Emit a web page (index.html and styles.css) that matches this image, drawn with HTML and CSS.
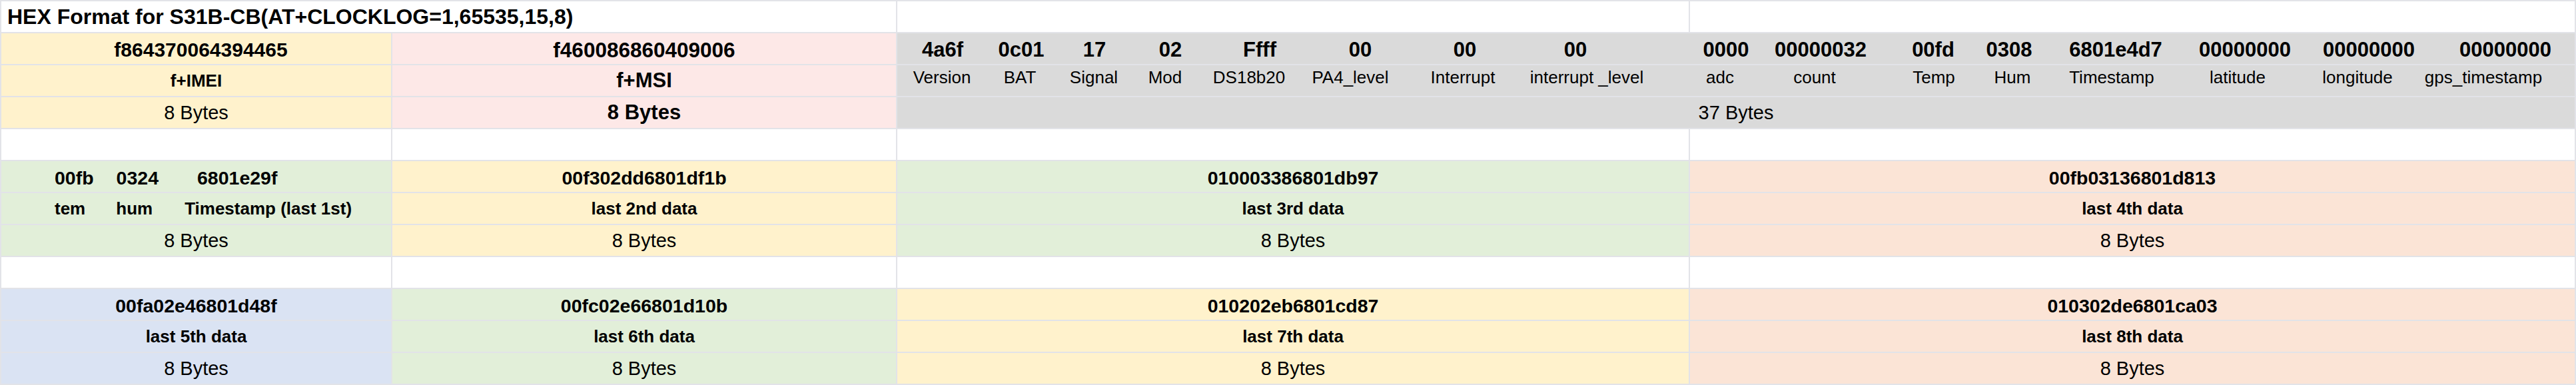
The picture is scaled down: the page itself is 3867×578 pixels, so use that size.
FILE: index.html
```html
<!DOCTYPE html>
<html lang="en">
<head>
<meta charset="utf-8">
<title>HEX Format for S31B-CB</title>
<link rel="stylesheet" href="styles.css">
</head>
<body>
<div class="sheet">
  <!-- row 0 -->
  <div class="cell title">HEX Format for S31B-CB(AT+CLOCKLOG=1,65535,15,8)</div>
  <div class="cell"></div>
  <div class="cell"></div>

  <!-- rows 1-3 -->
  <div class="cell yellow val v30 nudge">f864370064394465</div>
  <div class="cell pink val v31">f460086860409006</div>
  <div class="cell gray wide fields fvals">
    <span>4a6f</span><span>0c01</span><span>17</span><span>02</span><span>Ffff</span><span>00</span><span>00</span><span>00</span><span>0000</span><span>00000032</span><span>00fd</span><span>0308</span><span>6801e4d7</span><span>00000000</span><span>00000000</span><span>00000000</span>
  </div>

  <div class="cell yellow lbl">f+IMEI</div>
  <div class="cell pink lbl big">f+MSI</div>
  <div class="cell gray wide fields flbls">
    <span>Version</span><span>BAT</span><span>Signal</span><span>Mod</span><span>DS18b20</span><span>PA4_level</span><span>Interrupt</span><span>interrupt _level</span><span>adc</span><span>count</span><span>Temp</span><span>Hum</span><span>Timestamp</span><span>latitude</span><span>longitude</span><span>gps_timestamp</span>
  </div>

  <div class="cell yellow bytes">8 Bytes</div>
  <div class="cell pink bytes strong">8 Bytes</div>
  <div class="cell gray wide bytes">37 Bytes</div>

  <!-- row 4 blank -->
  <div class="cell"></div>
  <div class="cell"></div>
  <div class="cell"></div>
  <div class="cell"></div>

  <!-- rows 5-7 -->
  <div class="cell green val split">
    <span class="p1">00fb</span><span class="p2">0324</span><span class="p3">6801e29f</span>
  </div>
  <div class="cell yellow val">00f302dd6801df1b</div>
  <div class="cell green val">010003386801db97</div>
  <div class="cell peach val">00fb03136801d813</div>

  <div class="cell green lbl split split-lbl">
    <span class="q1">tem</span><span class="q2">hum</span><span class="q3">Timestamp (last 1st)</span>
  </div>
  <div class="cell yellow lbl">last 2nd data</div>
  <div class="cell green lbl">last 3rd data</div>
  <div class="cell peach lbl">last 4th data</div>

  <div class="cell green bytes">8 Bytes</div>
  <div class="cell yellow bytes">8 Bytes</div>
  <div class="cell green bytes">8 Bytes</div>
  <div class="cell peach bytes">8 Bytes</div>

  <!-- row 8 blank -->
  <div class="cell"></div>
  <div class="cell"></div>
  <div class="cell"></div>
  <div class="cell"></div>

  <!-- rows 9-11 -->
  <div class="cell blue val">00fa02e46801d48f</div>
  <div class="cell green val">00fc02e66801d10b</div>
  <div class="cell yellow val">010202eb6801cd87</div>
  <div class="cell peach val">010302de6801ca03</div>

  <div class="cell blue lbl">last 5th data</div>
  <div class="cell green lbl">last 6th data</div>
  <div class="cell yellow lbl">last 7th data</div>
  <div class="cell peach lbl">last 8th data</div>

  <div class="cell blue bytes">8 Bytes</div>
  <div class="cell green bytes">8 Bytes</div>
  <div class="cell yellow bytes">8 Bytes</div>
  <div class="cell peach bytes">8 Bytes</div>
</div>
</body>
</html>
```

FILE: styles.css
```css
html, body {
  margin: 0;
  padding: 0;
  background: #ffffff;
}

body {
  font-family: "Liberation Sans", Arial, sans-serif;
  color: #000000;
}

.sheet {
  box-sizing: border-box;
  width: 3867px;
  height: 578px;
  display: grid;
  grid-template-columns: 585px 756px 1188px 1328px;
  grid-auto-rows: 46px;
  gap: 2px;
  padding: 2px;
  background: #e2e3e8;
}

.cell {
  background: #ffffff;
  display: flex;
  align-items: center;
  justify-content: center;
  white-space: nowrap;
  overflow: visible;
  min-width: 0;
}

.wide { grid-column: span 2; }

.yellow { background: #fff2cc; }
.pink   { background: #fde8e7; }
.gray   { background: #dadada; }
.green  { background: #e2efd9; }
.peach  { background: #fbe4d6; }
.blue   { background: #dae3f3; }

.title {
  grid-column: span 2;
  justify-content: flex-start;
  padding-left: 9px;
  font-weight: bold;
  font-size: 32px;
}

.val {
  font-weight: bold;
  font-size: 28.5px;
  padding-top: 4px;
}

.v30 { font-size: 30px; }
.v31 { font-size: 31.5px; }

.nudge { padding-left: 14px; }

.lbl {
  font-weight: bold;
  font-size: 26px;
}

.big { font-size: 31px; }

.bytes {
  font-size: 29px;
}

.strong {
  font-weight: bold;
  font-size: 31px;
}

/* merged grey field cell: each field is a 100px slot, text centred on it */
.fields {
  justify-content: flex-start;
}

.fields > span {
  flex: none;
  width: 100px;
  min-width: 0;
  display: flex;
  justify-content: center;
}

.fvals {
  font-weight: bold;
  font-size: 31px;
  padding-top: 4px;
}

.flbls {
  font-size: 26px;
  padding-bottom: 9px;
}

.fvals > span:nth-child(1)  { margin-left: 18px; }
.fvals > span:nth-child(2)  { margin-left: 18px; }
.fvals > span:nth-child(3)  { margin-left: 10px; }
.fvals > span:nth-child(4)  { margin-left: 14px; }
.fvals > span:nth-child(5)  { margin-left: 34px; }
.fvals > span:nth-child(6)  { margin-left: 51px; }
.fvals > span:nth-child(7)  { margin-left: 57px; }
.fvals > span:nth-child(8)  { margin-left: 66px; }
.fvals > span:nth-child(9)  { margin-left: 126px; }
.fvals > span:nth-child(10) { margin-left: 42px; }
.fvals > span:nth-child(11) { margin-left: 69px; }
.fvals > span:nth-child(12) { margin-left: 14px; }
.fvals > span:nth-child(13) { margin-left: 60px; }
.fvals > span:nth-child(14) { margin-left: 94px; }
.fvals > span:nth-child(15) { margin-left: 86px; }
.fvals > span:nth-child(16) { margin-left: 105px; }

.flbls > span:nth-child(1)  { margin-left: 17px; }
.flbls > span:nth-child(2)  { margin-left: 17px; }
.flbls > span:nth-child(3)  { margin-left: 11px; }
.flbls > span:nth-child(4)  { margin-left: 7px; }
.flbls > span:nth-child(5)  { margin-left: 26px; }
.flbls > span:nth-child(6)  { margin-left: 52px; }
.flbls > span:nth-child(7)  { margin-left: 69px; }
.flbls > span:nth-child(8)  { margin-left: 86px; }
.flbls > span:nth-child(9)  { margin-left: 100px; }
.flbls > span:nth-child(10) { margin-left: 42px; }
.flbls > span:nth-child(11) { margin-left: 79px; }
.flbls > span:nth-child(12) { margin-left: 18px; }
.flbls > span:nth-child(13) { margin-left: 49px; }
.flbls > span:nth-child(14) { margin-left: 89px; }
.flbls > span:nth-child(15) { margin-left: 80px; }
.flbls > span:nth-child(16) { margin-left: 89px; }

/* first green cell with three separate fields */
.split {
  justify-content: flex-start;
  padding-left: 80px;
}

.p2 { margin-left: 34px; }
.p3 { margin-left: 58px; }

.split-lbl {
  padding-left: 80px;
}

.q2 { margin-left: 46px; }
.q3 { margin-left: 48px; }
```
